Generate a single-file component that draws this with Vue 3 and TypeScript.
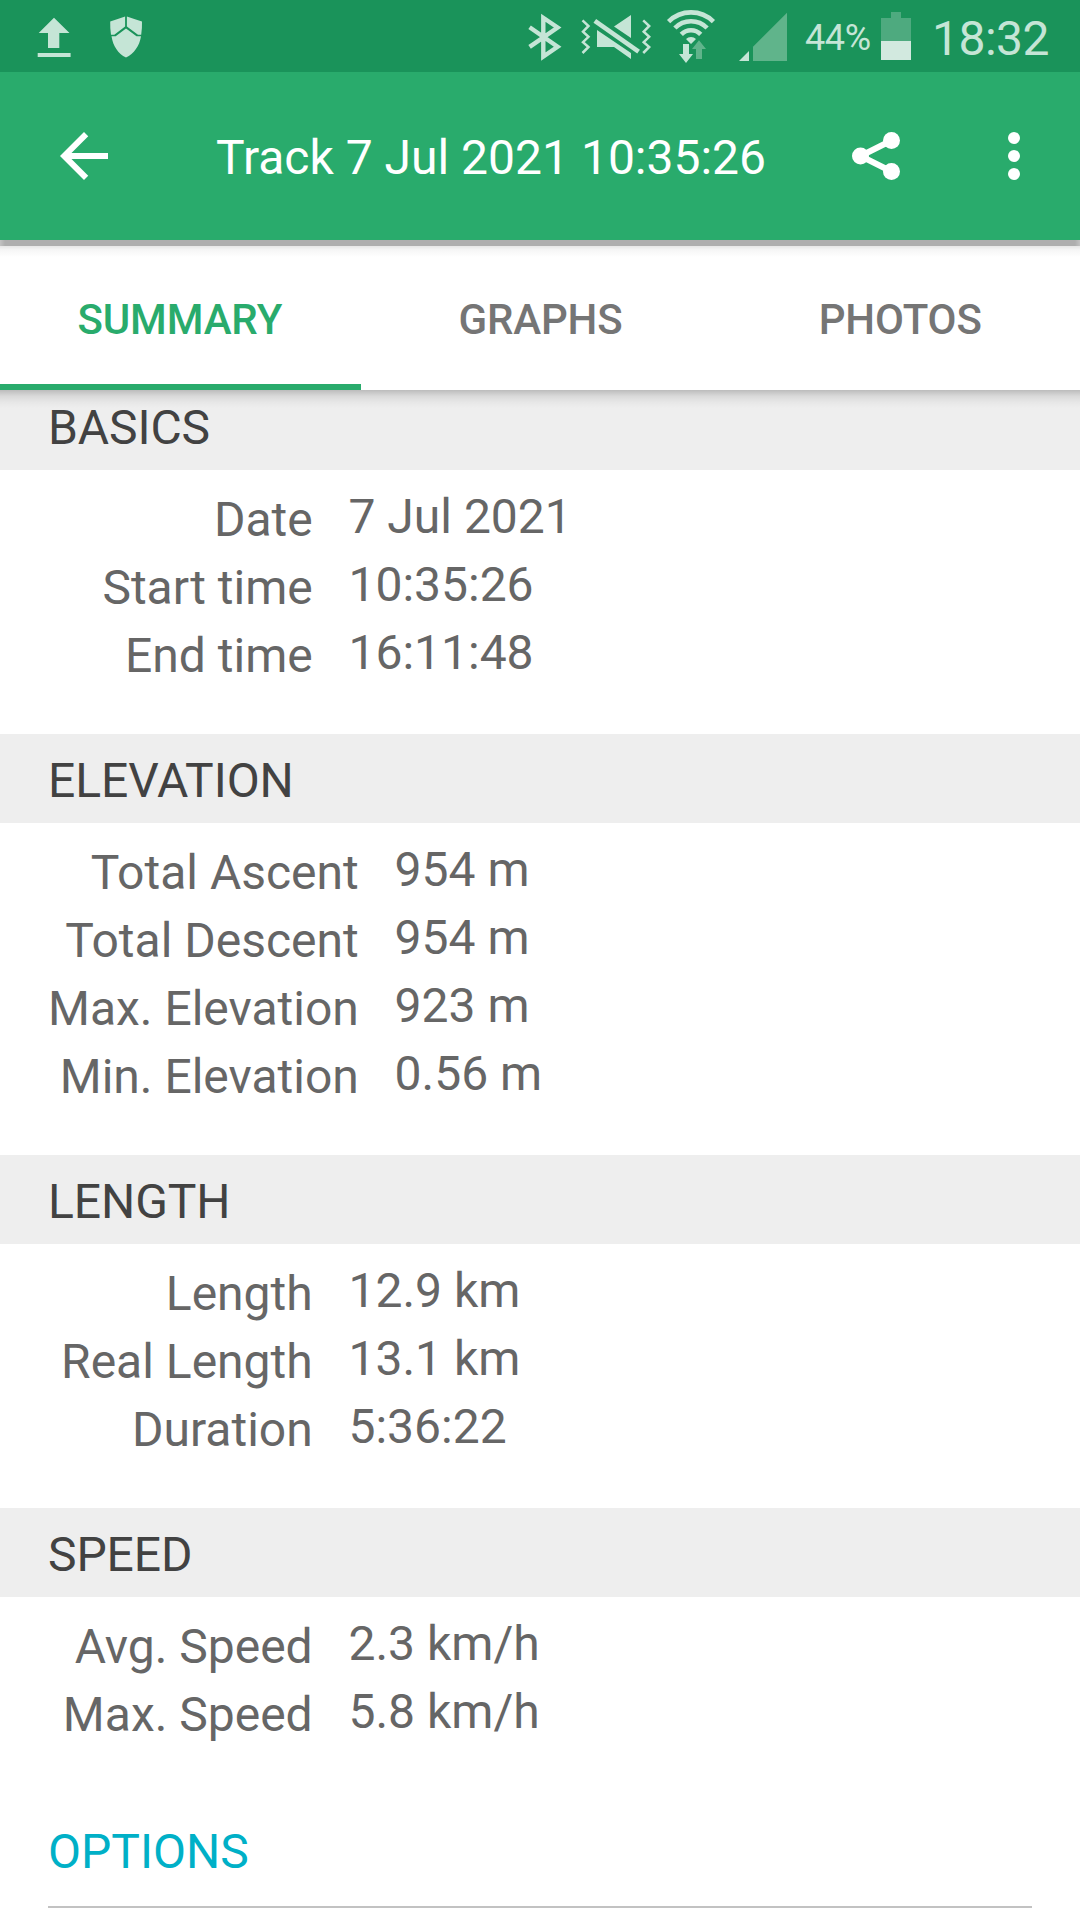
<script setup lang="ts">
interface Row {
  label: string
  value: string
}
interface Section {
  title: string
  rows: Row[]
}

const tabs: string[] = ['SUMMARY', 'GRAPHS', 'PHOTOS']
const activeTab = 'SUMMARY'

const sections: Section[] = [
  {
    title: 'BASICS',
    rows: [
      { label: 'Date', value: '7 Jul 2021' },
      { label: 'Start time', value: '10:35:26' },
      { label: 'End time', value: '16:11:48' },
    ],
  },
  {
    title: 'ELEVATION',
    rows: [
      { label: 'Total Ascent', value: '954 m' },
      { label: 'Total Descent', value: '954 m' },
      { label: 'Max. Elevation', value: '923 m' },
      { label: 'Min. Elevation', value: '0.56 m' },
    ],
  },
  {
    title: 'LENGTH',
    rows: [
      { label: 'Length', value: '12.9 km' },
      { label: 'Real Length', value: '13.1 km' },
      { label: 'Duration', value: '5:36:22' },
    ],
  },
  {
    title: 'SPEED',
    rows: [
      { label: 'Avg. Speed', value: '2.3 km/h' },
      { label: 'Max. Speed', value: '5.8 km/h' },
    ],
  },
]
</script>

<template>
  <div class="screen">
    <div class="status">
      <svg class="upload" width="36" height="72" viewBox="36 0 36 72">
        <path d="M54 17.7 69.5 33H59.3V48H48V33H38.7ZM37.7 53H70.6V57H37.7Z" />
      </svg>
      <svg class="shield" width="36" height="72" viewBox="108 0 36 72">
        <path d="M110.2 21.4Q118 19 125.1 16.5V26.5L114.3 34.7H111Q110 28 110.2 21.4ZM126.9 16.5Q134 19 142 21.4Q142.2 28 141.2 34.7H138L126.9 26.5ZM126 28.5 136.5 36.2H141C139.5 46 134 53.5 126 57.5C118 53.5 113 46 111.5 36.2H115.7Z" />
      </svg>
      <span class="spacer"></span>
      <svg class="bluetooth" width="36" height="72" viewBox="527 0 36 72">
        <path class="line" stroke-width="4.4" d="M529.6 27.3 557.6 46.7 543.3 56.6V17.8L557.6 27.5 529.6 46.9" />
      </svg>
      <svg class="mute" width="72" height="72" viewBox="580 0 72 72">
        <path d="M614 26.5 631 15V38ZM597 30 631 53V59L614 47H597Z" />
        <path class="line" stroke-width="4.6" d="M594.8 20.8 638.6 51.6" />
        <path class="line" stroke-width="2.5" d="M582.5 20.3 588.5 26 583 31.6 588.5 36.8 583 42.1 588.5 47 582.5 53M643.2 20.3 649.2 26 643.7 31.6 649.2 36.8 643.7 42.1 649.2 47 643.2 53" />
      </svg>
      <svg class="wifi" width="52" height="72" viewBox="665 0 52 72">
        <path class="line" stroke-width="4.6" d="M668.6 21.6A31.7 31.7 0 0 1 713.4 21.6M674.9 28A22.7 22.7 0 0 1 707.1 28M681.3 34.3A13.7 13.7 0 0 1 700.7 34.3" />
        <path d="M691 44 686 39A7 7 0 0 1 696 39ZM683 44H689V54H693L686 63 679 54H683Z" />
        <path class="dim" d="M699 40.3 706 49H702V59H696V49H692Z" />
      </svg>
      <svg class="signal" width="50" height="72" viewBox="738 0 50 72">
        <path d="M739 61H749V51Z" />
        <path class="dim" d="M753 61H787V12.7L753 46.7Z" />
      </svg>
      <span class="percent">44%</span>
      <svg class="battery" width="30" height="72" viewBox="881 0 30 72">
        <path class="empty" d="M881 18H891V12H901V18H911V41H881Z" />
        <path class="charge" d="M881 41H911V60H881Z" />
      </svg>
      <span class="clock">18:32</span>
    </div>

    <header class="appbar">
      <svg class="back" width="72" height="72" viewBox="0 0 24 24">
        <path d="M20 11H7.83l5.59-5.59L12 4l-8 8 8 8 1.41-1.41L7.83 13H20v-2z" />
      </svg>
      <h1>Track 7 Jul 2021 10:35:26</h1>
      <svg class="share" width="48" height="48" viewBox="0 0 48 48">
        <path d="M39.5 8.5 8.5 24 39.5 39.5" fill="none" stroke="#fff" stroke-width="6" />
        <circle cx="39.5" cy="8.5" r="8.5" />
        <circle cx="8.5" cy="24" r="8.5" />
        <circle cx="39.5" cy="39.5" r="8.5" />
      </svg>
      <svg class="more" width="12" height="48" viewBox="0 0 12 48">
        <circle cx="6" cy="6" r="6" />
        <circle cx="6" cy="24" r="6" />
        <circle cx="6" cy="42" r="6" />
      </svg>
    </header>

    <nav class="tabs">
      <div v-for="tab in tabs" :key="tab" class="tab" :class="{ active: tab === activeTab }">{{ tab }}</div>
    </nav>

    <main class="content">
      <section v-for="section in sections" :key="section.title">
        <h2>{{ section.title }}</h2>
        <dl>
          <template v-for="row in section.rows" :key="row.label">
            <dt>{{ row.label }}</dt>
            <dd>{{ row.value }}</dd>
          </template>
        </dl>
      </section>
      <div class="options">OPTIONS</div>
    </main>
  </div>
</template>

<style>
body {
  margin: 0;
  background: #fff;
}
</style>

<style scoped>
.screen {
  width: 1080px;
  height: 1920px;
  display: flex;
  flex-direction: column;
  overflow: hidden;
  background: #fff;
  font-family: Roboto, 'Liberation Sans', sans-serif;
  font-size: 48px;
}
svg {
  display: block;
  flex: none;
  fill: #fff;
}
.status {
  display: flex;
  flex: none;
  height: 72px;
  box-sizing: border-box;
  padding: 0 29px 0 36px;
  background: #1a935a;
  color: #c5e5d6;
  white-space: nowrap;
}
.status svg {
  fill: #c5e5d6;
}
.status .line {
  fill: none;
  stroke: #c5e5d6;
}
.status .dim {
  fill: #60b48b;
}
.status .empty {
  fill: #4eaa7f;
}
.status .charge {
  fill: #d2e9df;
}
.shield {
  margin-left: 36px;
}
.spacer {
  flex: 1;
}
.mute {
  margin-left: 17px;
}
.wifi {
  margin-left: 13px;
}
.signal {
  margin-left: 21px;
}
.percent {
  width: 76px;
  margin-left: 17px;
  font-size: 36px;
  letter-spacing: -0.4px;
  line-height: 77px;
}
.clock {
  width: 119px;
  margin-left: 21px;
  letter-spacing: -0.5px;
  line-height: 77px;
}
.appbar {
  display: flex;
  flex: none;
  align-items: center;
  height: 168px;
  box-sizing: border-box;
  padding: 0 60px 0 48px;
  background: #29ab6c;
  color: #fff;
}
h1 {
  flex: 1;
  margin: 0 0 0 96px;
  font-size: 48px;
  font-weight: 400;
  line-height: 56px;
  padding-top: 3px;
  white-space: nowrap;
}
.more {
  margin-left: 108px;
}
.tabs {
  position: relative;
  z-index: 1;
  display: flex;
  flex: none;
  height: 150px;
  background:
    linear-gradient(to right, rgba(255, 255, 255, 0.25), transparent 5px, transparent 1075px, rgba(255, 255, 255, 0.25)) 0 0 / 100% 6px no-repeat,
    linear-gradient(#aeaeae 6px, #e6e6e6 6px, #f6f6f6 10px, #fff 17px);
}
.tabs::after {
  content: '';
  position: absolute;
  top: 100%;
  left: 0;
  right: 0;
  height: 18px;
  background: linear-gradient(rgba(0, 0, 0, 0.21), rgba(0, 0, 0, 0.09) 6px, rgba(0, 0, 0, 0.03) 12px, transparent);
}
.tab {
  flex: 1;
  height: 150px;
  box-sizing: border-box;
  border-bottom: 6px solid transparent;
  font-size: 42px;
  font-weight: 500;
  letter-spacing: -0.15px;
  line-height: 159px;
  text-align: center;
  color: #757575;
}
.tab.active {
  padding-right: 1px;
  border-color: #29ab6c;
  color: #29ab6c;
}
.content {
  flex: 1;
  min-height: 0;
  overflow: hidden;
}
section:first-child {
  margin-top: -9px;
}
h2 {
  height: 89px;
  margin: 0;
  padding-left: 48px;
  background: #eee;
  color: #424242;
  font-size: 48px;
  font-weight: 400;
  letter-spacing: -0.08px;
  line-height: 93px;
}
dl {
  display: grid;
  grid-template-columns: minmax(264.7px, max-content) auto;
  grid-auto-rows: 68px;
  justify-content: start;
  column-gap: 35.8px;
  margin: 0;
  padding: 13px 0 47px 48px;
  color: #666;
}
dt {
  line-height: 74px;
  text-align: right;
  white-space: nowrap;
}
dd {
  margin: 0;
  line-height: 68px;
}
.options {
  height: 113px;
  margin: 0 48px;
  border-bottom: 2px solid #c2c2c2;
  color: #00b0c7;
  line-height: 117px;
}
</style>
